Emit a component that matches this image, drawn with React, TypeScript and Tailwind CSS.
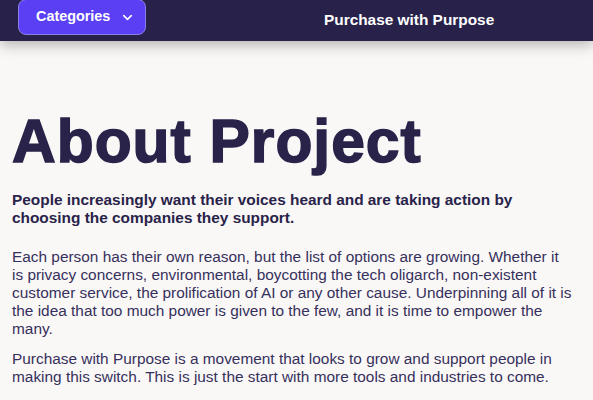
import { ChevronDown } from 'lucide-react'

export default function App() {
  return (
    <div className="min-h-[400px] bg-[#faf8f7] font-['Liberation_Sans',Arial,sans-serif] overflow-hidden">
      <header className="relative z-10 h-[41px] bg-[#28224a] shadow-[0_4px_14px_rgba(0,0,0,0.28)]">
        <div className="flex h-full items-start">
          <button className="ml-[18px] -mt-px flex h-[36px] w-[128px] items-center gap-[10px] rounded-lg border border-[#8b80e6] bg-[#5a3ff5] pl-[17px] text-[14.4px] font-bold text-white">
            Categories
            <ChevronDown size={15} strokeWidth={2.5} />
          </button>
          <h1 className="ml-[178px] mt-[8px] text-[15.4px] font-bold text-white">Purchase with Purpose</h1>
        </div>
      </header>

      <main className="pl-[12px] pr-[19px] pt-[64px] text-[#29234a]">
        <h2 className="text-[60.5px] font-bold leading-[72px] tracking-[1px] [-webkit-text-stroke:1.5px_#29234a]">
          About Project
        </h2>
        <p className="mt-[14px] text-[15.4px] font-bold leading-[18px]">
          People increasingly want their voices heard and are taking action by choosing the companies they support.
        </p>
        <p className="mt-[21px] text-[15.4px] leading-[18px] text-[#36305c]">
          Each person has their own reason, but the list of options are growing. Whether it is privacy concerns,
          environmental, boycotting the tech oligarch, non-existent customer service, the prolification of AI or any
          other cause. Underpinning all of it is the idea that too much power is given to the few, and it is time to
          empower the many.
        </p>
        <p className="mt-[12px] text-[15.4px] leading-[18px] text-[#36305c]">
          Purchase with Purpose is a movement that looks to grow and support people in making this switch. This is just
          the start with more tools and industries to come.
        </p>
      </main>
    </div>
  )
}
